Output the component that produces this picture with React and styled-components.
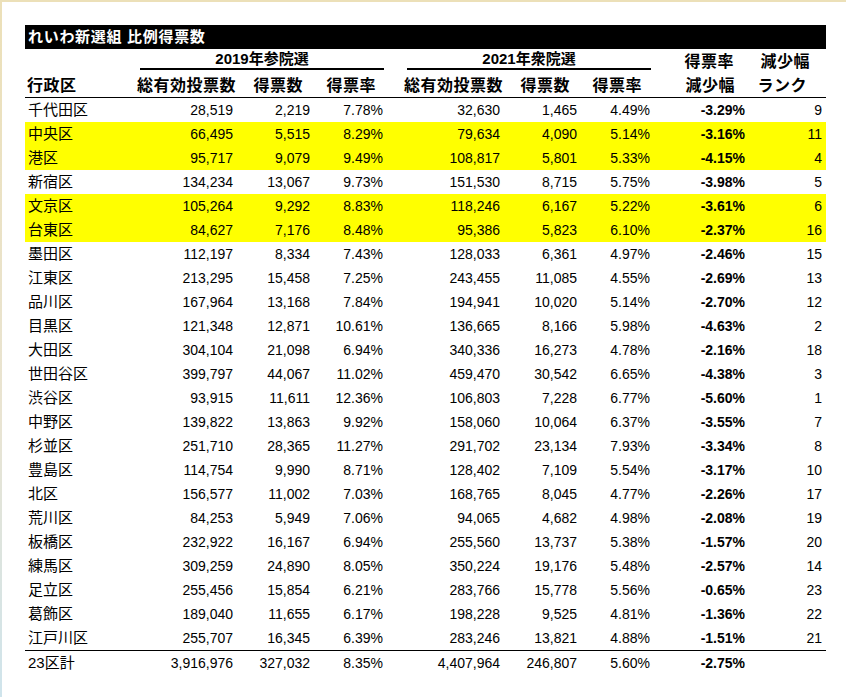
import React, { Children } from 'react';
import styled, { createGlobalStyle } from 'styled-components';

const GlobalStyle = createGlobalStyle`
  html, body {
    margin: 0;
    padding: 0;
    background: #fff;
  }
  body {
    font-family: 'Liberation Sans', 'Noto Sans CJK JP', sans-serif;
    color: #000;
  }
`;

const Page = styled.div`
  width: 846px;
  height: 697px;
  box-sizing: border-box;
  border-top: 2px solid #eee3c2;
  border-left: 2px solid #eee3c2;
  border-image: linear-gradient(to bottom, #ece0b8, #e9e4d2 60%, #cfe4ec) 1;
  border-right: 0;
  border-bottom: 0;
  padding: 23px 0 0 23px;
  overflow: hidden;
`;

const Sheet = styled.div`
  width: 801px;
`;

const Title = styled.div`
  height: 24px;
  background: #000;
  color: #fff;
  font-weight: bold;
  font-size: 15px;
  line-height: 24px;
  padding-left: 3px;
  letter-spacing: 0.7px;
`;

const COLS = '110px 102px 77px 73px 17px 100px 77px 73px 95px 77px';

const Row = styled.div`
  display: grid;
  grid-template-columns: ${COLS};
  height: ${(p) => p.$h || 24}px;
  background: ${(p) => (p.$hl ? '#ffff00' : 'transparent')};
  border-bottom: ${(p) => (p.$line ? '1px solid #000' : '0')};
  border-top: ${(p) => (p.$top ? '1px solid #000' : '0')};
`;

const GroupCell = styled.div`
  grid-column: ${(p) => p.$span};
  margin: 0 ${(p) => p.$mr || 3}px 0 ${(p) => p.$ml || 4}px;
  height: 18px;
  margin-top: 1px;
  border-bottom: 2px solid #000;
  text-align: center;
  font-weight: bold;
  font-size: 15px;
  line-height: 18px;
`;

const HeadCell = styled.div`
  grid-column: ${(p) => p.$col || 'auto'};
  text-align: ${(p) => (p.$left ? 'left' : 'right')};
  padding: ${(p) => (p.$left ? '0 0 0 2px' : `0 ${p.$pad || 0}px 0 0`)};
  font-weight: bold;
  font-size: 16px;
  line-height: ${(p) => p.$lh || 24}px;
  white-space: nowrap;
  letter-spacing: 0.5px;
`;

const Name = styled.div`
  padding-left: 3px;
  font-size: 15px;
  line-height: 24px;
  white-space: nowrap;
`;

const Num = styled.div`
  text-align: right;
  padding-right: 4px;
  font-size: 14px;
  line-height: 24px;
  font-weight: ${(p) => (p.$bold ? 'bold' : 'normal')};
  white-space: nowrap;
`;

const Gap = styled.div``;

const rows = [
  ['千代田区', '28,519', '2,219', '7.78%', '32,630', '1,465', '4.49%', '-3.29%', '9'],
  ['中央区', '66,495', '5,515', '8.29%', '79,634', '4,090', '5.14%', '-3.16%', '11', true],
  ['港区', '95,717', '9,079', '9.49%', '108,817', '5,801', '5.33%', '-4.15%', '4', true],
  ['新宿区', '134,234', '13,067', '9.73%', '151,530', '8,715', '5.75%', '-3.98%', '5'],
  ['文京区', '105,264', '9,292', '8.83%', '118,246', '6,167', '5.22%', '-3.61%', '6', true],
  ['台東区', '84,627', '7,176', '8.48%', '95,386', '5,823', '6.10%', '-2.37%', '16', true],
  ['墨田区', '112,197', '8,334', '7.43%', '128,033', '6,361', '4.97%', '-2.46%', '15'],
  ['江東区', '213,295', '15,458', '7.25%', '243,455', '11,085', '4.55%', '-2.69%', '13'],
  ['品川区', '167,964', '13,168', '7.84%', '194,941', '10,020', '5.14%', '-2.70%', '12'],
  ['目黒区', '121,348', '12,871', '10.61%', '136,665', '8,166', '5.98%', '-4.63%', '2'],
  ['大田区', '304,104', '21,098', '6.94%', '340,336', '16,273', '4.78%', '-2.16%', '18'],
  ['世田谷区', '399,797', '44,067', '11.02%', '459,470', '30,542', '6.65%', '-4.38%', '3'],
  ['渋谷区', '93,915', '11,611', '12.36%', '106,803', '7,228', '6.77%', '-5.60%', '1'],
  ['中野区', '139,822', '13,863', '9.92%', '158,060', '10,064', '6.37%', '-3.55%', '7'],
  ['杉並区', '251,710', '28,365', '11.27%', '291,702', '23,134', '7.93%', '-3.34%', '8'],
  ['豊島区', '114,754', '9,990', '8.71%', '128,402', '7,109', '5.54%', '-3.17%', '10'],
  ['北区', '156,577', '11,002', '7.03%', '168,765', '8,045', '4.77%', '-2.26%', '17'],
  ['荒川区', '84,253', '5,949', '7.06%', '94,065', '4,682', '4.98%', '-2.08%', '19'],
  ['板橋区', '232,922', '16,167', '6.94%', '255,560', '13,737', '5.38%', '-1.57%', '20'],
  ['練馬区', '309,259', '24,890', '8.05%', '350,224', '19,176', '5.48%', '-2.57%', '14'],
  ['足立区', '255,456', '15,854', '6.21%', '283,766', '15,778', '5.56%', '-0.65%', '23'],
  ['葛飾区', '189,040', '11,655', '6.17%', '198,228', '9,525', '4.81%', '-1.36%', '22'],
  ['江戸川区', '255,707', '16,345', '6.39%', '283,246', '13,821', '4.88%', '-1.51%', '21'],
];

const total = ['23区計', '3,916,976', '327,032', '8.35%', '4,407,964', '246,807', '5.60%', '-2.75%', ''];

const DataRow = ({ r, hl, top }) => (
  <Row $hl={hl} $top={top}>
    <Name>{r[0]}</Name>
    <Num>{r[1]}</Num>
    <Num>{r[2]}</Num>
    <Num>{r[3]}</Num>
    <Gap />
    <Num>{r[4]}</Num>
    <Num>{r[5]}</Num>
    <Num>{r[6]}</Num>
    <Num $bold>{r[7]}</Num>
    <Num>{r[8]}</Num>
  </Row>
);

const App = () => (
  <Page>
    <GlobalStyle />
    <Sheet>
      <Title>れいわ新選組 比例得票数</Title>
      <Row $h={25}>
        <GroupCell $span="2 / 5" $ml={5} $mr={3}>2019年参院選</GroupCell>
        <GroupCell $span="6 / 9" $ml={3} $mr={3}>2021年衆院選</GroupCell>
        <HeadCell $col="9" $pad={15} $lh={25}>得票率</HeadCell>
        <HeadCell $col="10" $pad={16} $lh={25}>減少幅</HeadCell>
      </Row>
      <Row $h={23} $line>
        <HeadCell $left>行政区</HeadCell>
        <HeadCell $pad={1}>総有効投票数</HeadCell>
        <HeadCell $pad={11}>得票数</HeadCell>
        <HeadCell $pad={11}>得票率</HeadCell>
        <Gap />
        <HeadCell $pad={1}>総有効投票数</HeadCell>
        <HeadCell $pad={11}>得票数</HeadCell>
        <HeadCell $pad={12}>得票率</HeadCell>
        <HeadCell $pad={14}>減少幅</HeadCell>
        <HeadCell $pad={19}>ランク</HeadCell>
      </Row>
      {Children.toArray(rows.map((r) => <DataRow r={r} hl={r[9]} />))}
      <DataRow r={total} top />
    </Sheet>
  </Page>
);

export default App;
